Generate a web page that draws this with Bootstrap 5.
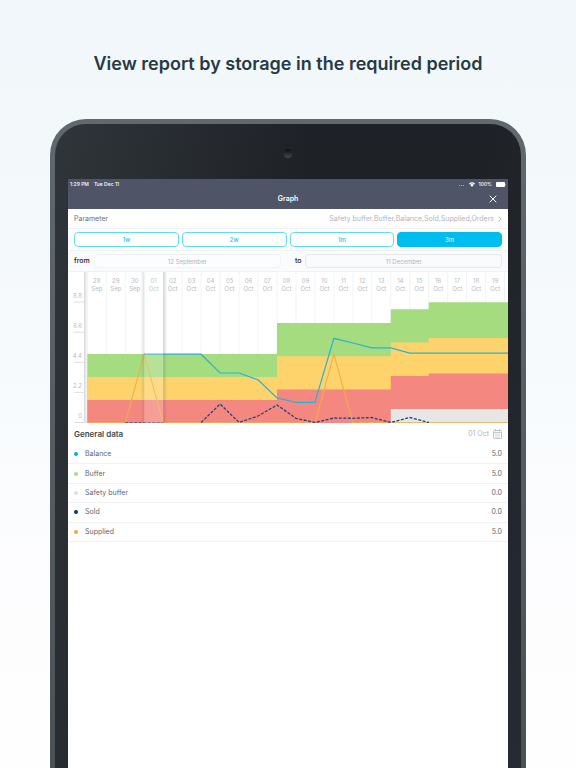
<!DOCTYPE html>
<html lang="en">
<head>
<meta charset="utf-8">
<meta name="viewport" content="width=device-width, initial-scale=1">
<title>Graph</title>
<link href="https://cdn.jsdelivr.net/npm/bootstrap@5.3.0/dist/css/bootstrap.min.css" rel="stylesheet">
<style>
body{font-family:Inter,"Liberation Sans",sans-serif;font-size:7px;line-height:10px;color:#61666c;background:linear-gradient(#f1f7fa,#f6fafc 45%,#fdfdff 75%,#fefefe)}
.promo{height:100vh;padding-top:50px}
.headline{font-size:18px;line-height:28px;font-weight:600;color:#263a44;margin-bottom:41px}
.tablet{margin:0 50px;padding:55px 13px 0;border:5px solid transparent;border-bottom:0;border-radius:36px 36px 0 0;background:linear-gradient(100deg,#30353a,#1e2226 45%,#1e2226 75%,#262b32) padding-box,linear-gradient(#606870,#4a5157) border-box}
.lens{top:25px;width:9px;height:9px;background:linear-gradient(#0c0c0d,#4a4a4a)}
.topbar{background:#4f5567;color:#fff;height:30px}
.status{font-size:5px;line-height:10px;font-weight:500;padding:0 2px}
.status .clock{margin-right:5px}
.bar-title{font-size:7px;line-height:20px;font-weight:600}
.close-btn{right:8px;top:3px;width:14px;height:14px}
.line-row{border-bottom:1px solid #f1f2f4;padding:0 6px}
.param{height:20px;padding-top:1px;color:#6b7076}
.pale{color:#b2b5ba}
.ranges{height:22px;gap:3px}
.range-btn{height:15px;padding:0;border:1px solid #5fdcf7;border-radius:4px;color:#14bfe8;background:#fff;font-size:6px;line-height:13px;font-weight:500}
.range-btn.active{background:#00bdf0;border-color:#00bdf0;color:#c9f2fd}
.dates{height:21px;background:#fafbfd}
.dates label{color:#1d2227;font-weight:500;margin-right:4px}
.dates .to-label{margin-left:14px}
.date-in{flex:20 1 0;height:14px;min-width:0;padding:0;border:1px solid #f0f2f5;border-radius:4px;background:#fcfdfe;color:#b2b5ba;font-size:6px;text-align:center}
.date-in.end{flex-grow:21;border-color:#e6e7eb;background:#fafbfd}
.plot text{font-size:6px;fill:#b9bcc1}
.plot .tick{text-anchor:end}
.plot .day{text-anchor:middle}
.gen-head{height:22px;padding:0 6px}
.gen-head h2{font-size:8px;line-height:12px;font-weight:600;color:#43484e}
.values{height:97px}
.dot{width:4px;height:4px;margin-right:7px}
.c-bal{background:#00aef0}.c-buf{background:#a5e07a}.c-safe{background:#dedfe1}.c-sold{background:#0a3284}.c-sup{background:#eda93a}
</style>
<script src="https://cdn.jsdelivr.net/npm/bootstrap@5.3.0/dist/js/bootstrap.bundle.min.js"></script>
</head>
<body>
<main class="promo d-flex flex-column overflow-hidden">
<h1 class="headline text-center">View report by storage in the required period</h1>
<div class="tablet position-relative flex-fill d-flex flex-column">
<span class="lens position-absolute start-50 translate-middle-x rounded-circle"></span>
<div class="bg-white flex-fill">
<header class="topbar position-relative">
<div class="status d-flex align-items-center">
<span class="clock">1:29 PM</span><span>Tue Dec 11</span>
<svg class="ms-auto me-1" width="6" height="4" viewBox="0 0 6 4" fill="#a5a9b5"><path d="M0 3h1v1H0zM2 3h1v1H2zM4 3h1v1H4z"/></svg>
<svg width="6" height="5" viewBox="0 0 12 10" fill="#fff"><path d="M0 3.200Q6-2 12 3.200L10.600 4.800Q6 1 1.400 4.800zM2.300 5.600Q6 2.600 9.700 5.600L6 9.800z"/></svg>
<span class="mx-1">100%</span>
<svg width="10" height="5" viewBox="0 0 10 5" fill="#fff"><rect width="9" height="5" rx="1"/><path d="M9.300 1.500Q10.300 2.500 9.300 3.500z"/></svg>
</div>
<div class="position-relative text-center bar-title">Graph
<button type="button" aria-label="Close" class="close-btn btn p-0 border-0 position-absolute d-flex align-items-center justify-content-center"><svg width="8" height="8" viewBox="0 0 8 8" stroke="#fff" fill="none"><path d="M.7.7l6.600 6.600M7.300.7L.7 7.300"/></svg></button></div>
</header>
<div class="line-row param d-flex align-items-center justify-content-between">
<span>Parameter</span>
<a href="#" class="pale text-decoration-none d-flex align-items-center">Safety buffer,Buffer,Balance,Sold,Supplied,Orders<svg class="ms-1" width="4" height="6" viewBox="0 0 4 6" fill="none" stroke="#b4b7bc"><path d="M.6.5L3.200 3 .6 5.500"/></svg></a>
</div>
<div class="line-row ranges d-flex align-items-center">
<button type="button" class="range-btn btn flex-fill w-100">1w</button><button type="button" class="range-btn btn flex-fill w-100">2w</button><button type="button" class="range-btn btn flex-fill w-100">1m</button><button type="button" class="range-btn btn flex-fill w-100 active">3m</button>
</div>
<div class="line-row dates d-flex align-items-center">
<label for="from">from</label><input id="from" type="text" class="date-in" value="12 September">
<label for="to" class="to-label">to</label><input id="to" type="text" class="date-in end" value="11 December">
</div>
<svg class="plot d-block w-100" viewBox="0 0 440 151" role="img" aria-label="Storage graph">
<defs>
<linearGradient id="fadeR"><stop stop-color="#50555f" stop-opacity=".24"/><stop offset="1" stop-color="#50555f" stop-opacity="0"/></linearGradient>
<linearGradient id="fadeL"><stop stop-color="#50555f" stop-opacity="0"/><stop offset="1" stop-color="#50555f" stop-opacity=".16"/></linearGradient>
</defs>
<g id="grid" stroke="#f0f4f5"></g>
<g id="labels"></g>
<path fill="#a6dc80" d="M19.300 82H209V51H322.800V37.300H360.700V30.300H440V151H19.300z"/>
<path fill="#ffd36c" d="M19.300 105H209V84.200H322.800V70.500H360.700V66H440V151H19.300z"/>
<path fill="#f48880" d="M19.300 128H209V117.500H322.800V104H360.700V101.600H440V151H19.300z"/>
<path fill="#e6e6e6" d="M322.800 137H440V151H322.800z"/>
<g fill="none" stroke-width="1.100">
<path id="supplied" stroke="#edae48"/>
<path id="soldStart" stroke="#6a5a80" stroke-dasharray="3 1.500"/>
<path id="sold" stroke="#24407f" stroke-dasharray="3 1.500" stroke-width="1.300"/>
<path id="balance" stroke="#28b1d6" stroke-width="1.200"/>
</g>
<rect x="76.200" y="0" width="19" height="151" fill="#fff" opacity=".18"/>
<rect x="72.200" width="4" height="151" fill="url(#fadeL)"/>
<rect x="95.200" width="4" height="151" fill="url(#fadeR)"/>
<rect x="16" width="3.500" height="151" fill="url(#fadeR)"/>
<path stroke="#dcdee1" d="M6 30H16M6 60.200H16M6 90.300H16M6 120.400H16M6 150.500H16"/>
<text class="tick" x="14" y="26">8.8</text><text class="tick" x="14" y="56">6.6</text><text class="tick" x="14" y="86">4.4</text><text class="tick" x="14" y="116">2.2</text><text class="tick" x="14" y="146">0</text>
</svg>
<div class="gen-head d-flex align-items-center justify-content-between">
<h2 class="m-0">General data</h2>
<span class="pale d-flex align-items-center">01 Oct<svg class="ms-1" width="9" height="10" viewBox="0 0 9 10" fill="none" stroke="#b4b7bc" stroke-width=".8"><rect x=".5" y="1.500" width="8" height="8" rx=".8"/><path d="M.5 3.600h8M2.500 0v2.400M6.500 0v2.400"/><path stroke="#d3d5d8" d="M2 5.200h5M2 6.700h5M2 8.200h5"/></svg></span>
</div>
<ul class="values list-unstyled d-flex flex-column m-0">
<li class="line-row flex-fill d-flex align-items-center"><span class="dot rounded-circle c-bal"></span>Balance<span class="ms-auto">5.0</span></li>
<li class="line-row flex-fill d-flex align-items-center"><span class="dot rounded-circle c-buf"></span>Buffer<span class="ms-auto">5.0</span></li>
<li class="line-row flex-fill d-flex align-items-center"><span class="dot rounded-circle c-safe"></span>Safety buffer<span class="ms-auto">0.0</span></li>
<li class="line-row flex-fill d-flex align-items-center"><span class="dot rounded-circle c-sold"></span>Sold<span class="ms-auto">0.0</span></li>
<li class="line-row flex-fill d-flex align-items-center"><span class="dot rounded-circle c-sup"></span>Supplied<span class="ms-auto">5.0</span></li>
</ul>
</div>
</div>
</main>
<script>
const X0=19.3, STEP=18.97, px=i=>(X0+STEP*i).toFixed(1);
let lines='', labels='';
for(let i=0;i<=22;i++) lines+=`<path d="M${px(i)} 0V151"/>`;
for(let i=0;i<22;i++){
  const day=i<3?28+i:i-2, month=i<3?'Sep':'Oct', c=px(i+.5);
  labels+=`<text class="day" x="${c}" y="11">${String(day).padStart(2,'0')}</text><text class="day" x="${c}" y="18.500">${month}</text>`;
}
document.getElementById('grid').innerHTML=lines;
document.getElementById('labels').innerHTML=labels;
const draw=(id,pts)=>document.getElementById(id).setAttribute('d','M'+pts.map(([i,y])=>px(i)+' '+y).join('L'));
draw('balance',[[3,82.2],[6,82.2],[7,101],[8,101],[9,107.8],[10,126],[11,130.3],[12,130.3],[13,66.3],[14,71],[15,75.8],[16,75.8],[17,81.2],[22.2,81.2]]);
draw('supplied',[[0,150.9],[2,150.9],[3,82.2],[4,150.9],[12,150.9],[13,82.2],[14,150.9],[22.2,150.9]]);
draw('soldStart',[[2,150.5],[4,150.5]]);
draw('sold',[[6,150.5],[7,132],[8,150.5],[9,144],[10,133],[11,146.3],[12,150.5],[13,146],[14,146.3],[15,145.5],[16,150.5],[17,145.5],[18,150.5]]);
</script>
</body>
</html>
